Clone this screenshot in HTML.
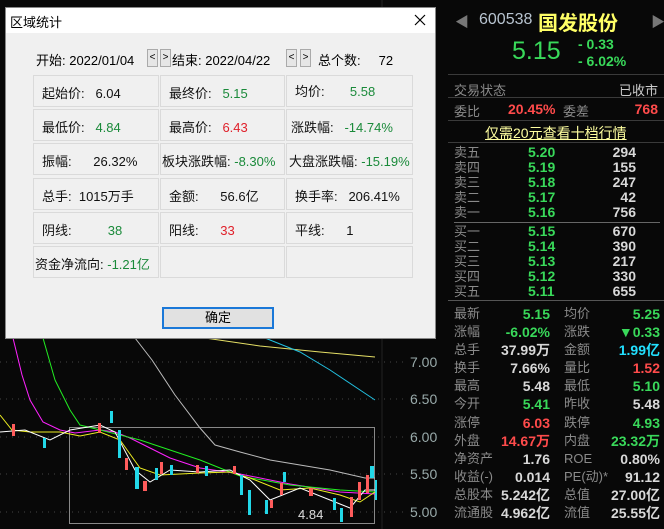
<!DOCTYPE html>
<html><head><meta charset="utf-8"><style>
*{margin:0;padding:0;box-sizing:border-box}
body{width:664px;height:529px;background:#080808;position:relative;overflow:hidden;font-family:"Liberation Sans","Noto Sans CJK SC",sans-serif}
.a{position:absolute;white-space:nowrap}
#dlg{position:absolute;left:5px;top:7px;width:431px;height:332px;background:#f0f0f0;border:1px solid #888}
#dlg .t{position:absolute;left:0;top:0;width:100%;height:25px;background:#fff;font-size:13px;color:#000;padding:4px 0 0 4px}
.c{position:absolute;border:1px solid #dadada;height:32px;font-size:13px;color:#111;padding:7px 0 0 8px;white-space:nowrap}
.g{color:#1a8a3a}.r{color:#e0202a}
.arr{position:absolute;width:11px;height:18px;border:1px solid #aaa;background:#e6e6e6;font-size:10px;text-align:center;line-height:15px;color:#000}
.rp{font-size:13px;color:#8a8a8a}
.gr{color:#39d95a}.rd{color:#ff4b4b}.wh{color:#d8d8d8}
.hl{position:absolute;left:448px;width:216px;height:1px;background:#3a3a3a}
</style></head><body>
<svg class="a" style="left:0;top:0" width="447" height="529">
<g stroke="#444" stroke-dasharray="1,5"><line x1="0" y1="362" x2="405" y2="362"/><line x1="0" y1="399" x2="405" y2="399"/><line x1="0" y1="437" x2="405" y2="437"/><line x1="0" y1="474" x2="405" y2="474"/><line x1="0" y1="512" x2="405" y2="512"/></g>
<line x1="382" y1="0" x2="382" y2="529" stroke="#222"/>
<rect x="69.5" y="427.5" width="305" height="96" fill="none" stroke="#888"/>
<polyline fill="none" stroke="#bbb" points="135,338 152,360 175,395 200,428 215,445 240,452 270,460 330,470 365,478 375,478"/>
<polyline fill="none" stroke="#e6e066" points="205,338 260,346 320,352 375,357"/>
<polyline fill="none" stroke="#22c0e0" points="265,338 300,352 330,370 360,390 375,400"/>
<polyline fill="none" stroke="#ff22ff" points="13,338 22,375 30,400 43,422 60,430 75,433 100,430 115,432 130,438 150,448 170,458 200,468 240,474 290,484 340,492 375,494"/>
<polyline fill="none" stroke="#22ee22" points="43,338 55,380 70,410 80,425 100,430 140,440 200,460 240,476 290,485 340,490 375,492"/>
<polyline fill="none" stroke="#eeee22" points="0,415 12,430 30,432 60,432 80,436 100,432 120,440 140,468 160,475 200,473 230,472 250,478 280,490 310,488 340,495 360,502 375,492"/>
<polyline fill="none" stroke="#fff" points="0,432 25,430 50,440 70,430 100,425 115,432 135,470 150,482 170,470 200,472 230,470 250,480 270,500 300,488 330,500 350,508 365,490 375,490"/>
<g fill="#22d8e8">
<rect x="43" y="438" width="3" height="10"/><rect x="118" y="430" width="3" height="28"/><rect x="135" y="467" width="4" height="22"/><rect x="110" y="411" width="3" height="12"/><rect x="155" y="468" width="3" height="12"/><rect x="170" y="465" width="3" height="10"/><rect x="205" y="466" width="3" height="10"/><rect x="240" y="475" width="3" height="20"/><rect x="248" y="490" width="3" height="25"/><rect x="265" y="500" width="3" height="14"/><rect x="283" y="472" width="3" height="10"/><rect x="333" y="498" width="3" height="12"/><rect x="340" y="508" width="3" height="14"/><rect x="370" y="466" width="4" height="12"/><rect x="375" y="480" width="2" height="20"/>
</g>
<g fill="#ff5c5c">
<rect x="12" y="424" width="3" height="12"/><rect x="98" y="423" width="3" height="10"/><rect x="125" y="458" width="3" height="12"/><rect x="143" y="481" width="4" height="10"/><rect x="160" y="462" width="3" height="12"/><rect x="196" y="465" width="3" height="8"/><rect x="233" y="466" width="3" height="8"/><rect x="270" y="500" width="3" height="8"/><rect x="280" y="483" width="3" height="12"/><rect x="309" y="488" width="4" height="8"/><rect x="350" y="497" width="3" height="20"/><rect x="358" y="482" width="3" height="18"/><rect x="366" y="475" width="3" height="18"/>
</g>
<text x="298" y="519" fill="#ddd" font-size="13" font-family="Liberation Sans">4.84</text>
<g fill="#9aa" font-size="14" font-family="Liberation Sans"><text x="410" y="367">7.00</text><text x="410" y="404">6.50</text><text x="410" y="442">6.00</text><text x="410" y="479">5.50</text><text x="410" y="517">5.00</text></g>
<line x1="447.5" y1="0" x2="447.5" y2="529" stroke="#555"/>
</svg>

<div id="dlg">
<div class="t">区域统计<svg class="a" style="right:9px;top:6px" width="12" height="12"><path d="M1 1L11 11M11 1L1 11" stroke="#000" stroke-width="1.2"/></svg></div>
<div class="a" style="left:30px;top:42px;font-size:13px">开始: 2022/01/04</div>
<div class="arr" style="left:141px;top:41px">&lt;</div><div class="arr" style="left:154px;top:41px">&gt;</div>
<div class="a" style="left:166px;top:42px;font-size:13px">结束: 2022/04/22</div>
<div class="arr" style="left:280px;top:41px">&lt;</div><div class="arr" style="left:294px;top:41px">&gt;</div>
<div class="a" style="left:312px;top:42px;font-size:13px">总个数:&nbsp;&nbsp;&nbsp;&nbsp;&nbsp;72</div>

<div class="c" style="left:27px;top:67px;width:126px">起始价:&nbsp;&nbsp; 6.04</div>
<div class="c" style="left:154px;top:67px;width:125px">最终价:&nbsp;&nbsp; <span class="g">5.15</span></div>
<div class="c" style="left:280px;top:67px;width:127px;padding-top:5px">均价:&nbsp;&nbsp;&nbsp;&nbsp;&nbsp;&nbsp; <span class="g">5.58</span></div>

<div class="c" style="left:27px;top:101px;width:126px">最低价:&nbsp;&nbsp; <span class="g">4.84</span></div>
<div class="c" style="left:154px;top:101px;width:125px">最高价:&nbsp;&nbsp; <span class="r">6.43</span></div>
<div class="c" style="left:280px;top:101px;width:127px;padding-left:4px">涨跌幅:&nbsp;&nbsp; <span class="g">-14.74%</span></div>

<div class="c" style="left:27px;top:135px;width:126px">振幅:&nbsp;&nbsp;&nbsp;&nbsp;&nbsp; 26.32%</div>
<div class="c" style="left:154px;top:135px;width:125px;padding-left:1px">板块涨跌幅: <span class="g">-8.30%</span></div>
<div class="c" style="left:280px;top:135px;width:127px;padding-left:2px">大盘涨跌幅: <span class="g">-15.19%</span></div>

<div class="c" style="left:27px;top:170px;width:126px">总手:&nbsp; 1015万手</div>
<div class="c" style="left:154px;top:170px;width:125px">金额:&nbsp;&nbsp;&nbsp;&nbsp;&nbsp; 56.6亿</div>
<div class="c" style="left:280px;top:170px;width:127px">换手率:&nbsp;&nbsp; 206.41%</div>

<div class="c" style="left:27px;top:204px;width:126px">阴线:&nbsp;&nbsp;&nbsp;&nbsp;&nbsp;&nbsp;&nbsp;&nbsp;&nbsp; <span class="g">38</span></div>
<div class="c" style="left:154px;top:204px;width:125px">阳线:&nbsp;&nbsp;&nbsp;&nbsp;&nbsp; <span class="r">33</span></div>
<div class="c" style="left:280px;top:204px;width:127px">平线:&nbsp;&nbsp;&nbsp;&nbsp;&nbsp; 1</div>

<div class="c" style="left:27px;top:238px;width:126px;padding-left:1px">资金净流向: <span class="g">-1.21亿</span></div>
<div class="c" style="left:154px;top:238px;width:125px"></div>
<div class="c" style="left:280px;top:238px;width:127px"></div>

<div class="a" style="left:156px;top:299px;width:112px;height:22px;border:2px solid #1a78d8;background:#e1e1e1;font-size:13px;text-align:center;line-height:18px">确定</div>
</div>

<div class="a" style="left:455px;top:12px;color:#777;font-size:14px">◀</div>
<div class="a" style="left:651px;top:12px;color:#777;font-size:14px">▶</div>
<div class="a" style="left:479px;top:11px;color:#b8c4d0;font-size:16px">600538</div>
<div class="a" style="left:538px;top:7px;color:#ffff66;font-size:20px;font-weight:bold">国发股份</div>
<div class="a gr" style="left:512px;top:37px;font-size:25px">5.15</div>
<div class="a gr" style="left:578px;top:36px;font-size:14px;font-weight:bold">- 0.33</div>
<div class="a gr" style="left:578px;top:53px;font-size:14px;font-weight:bold">- 6.02%</div>
<div class="hl" style="top:74px"></div>
<div class="a rp" style="left:454px;top:80px">交易状态</div>
<div class="a" style="right:6px;top:80px;font-size:13px;color:#ccc">已收市</div>
<div class="hl" style="top:97px"></div>
<div class="a rp" style="left:454px;top:101px">委比</div>
<div class="a rd" style="left:508px;top:101px;font-size:14px;font-weight:bold">20.45%</div>
<div class="a rp" style="left:563px;top:101px">委差</div>
<div class="a rd" style="right:6px;top:101px;font-size:14px;font-weight:bold">768</div>
<div class="hl" style="top:120px"></div>
<div class="a" style="left:485px;top:123px;font-size:14px;color:#ffffa0;text-decoration:underline">仅需20元查看十档行情</div>
<div class="hl" style="top:142px"></div>

<div style="position:absolute;left:454px;top:145px;width:206px;font-size:14px;line-height:15px">
<div style="position:relative;height:15px"><span class="rp" style="position:absolute;left:0">卖五</span><span class="gr" style="position:absolute;left:74px;font-weight:bold">5.20</span><span class="wh" style="position:absolute;right:24px;font-weight:bold">294</span></div>
<div style="position:relative;height:15px"><span class="rp" style="position:absolute;left:0">卖四</span><span class="gr" style="position:absolute;left:74px;font-weight:bold">5.19</span><span class="wh" style="position:absolute;right:24px;font-weight:bold">155</span></div>
<div style="position:relative;height:15px"><span class="rp" style="position:absolute;left:0">卖三</span><span class="gr" style="position:absolute;left:74px;font-weight:bold">5.18</span><span class="wh" style="position:absolute;right:24px;font-weight:bold">247</span></div>
<div style="position:relative;height:15px"><span class="rp" style="position:absolute;left:0">卖二</span><span class="gr" style="position:absolute;left:74px;font-weight:bold">5.17</span><span class="wh" style="position:absolute;right:24px;font-weight:bold">42</span></div>
<div style="position:relative;height:15px"><span class="rp" style="position:absolute;left:0">卖一</span><span class="gr" style="position:absolute;left:74px;font-weight:bold">5.16</span><span class="wh" style="position:absolute;right:24px;font-weight:bold">756</span></div>
<div style="height:1px;background:#666;margin:2px 0 1px"></div>
<div style="position:relative;height:15px"><span class="rp" style="position:absolute;left:0">买一</span><span class="gr" style="position:absolute;left:74px;font-weight:bold">5.15</span><span class="wh" style="position:absolute;right:24px;font-weight:bold">670</span></div>
<div style="position:relative;height:15px"><span class="rp" style="position:absolute;left:0">买二</span><span class="gr" style="position:absolute;left:74px;font-weight:bold">5.14</span><span class="wh" style="position:absolute;right:24px;font-weight:bold">390</span></div>
<div style="position:relative;height:15px"><span class="rp" style="position:absolute;left:0">买三</span><span class="gr" style="position:absolute;left:74px;font-weight:bold">5.13</span><span class="wh" style="position:absolute;right:24px;font-weight:bold">217</span></div>
<div style="position:relative;height:15px"><span class="rp" style="position:absolute;left:0">买四</span><span class="gr" style="position:absolute;left:74px;font-weight:bold">5.12</span><span class="wh" style="position:absolute;right:24px;font-weight:bold">330</span></div>
<div style="position:relative;height:15px"><span class="rp" style="position:absolute;left:0">买五</span><span class="gr" style="position:absolute;left:74px;font-weight:bold">5.11</span><span class="wh" style="position:absolute;right:24px;font-weight:bold">655</span></div>
</div>
<div class="hl" style="top:300px;background:#555"></div>

<div style="position:absolute;left:454px;top:305px;width:206px;font-size:14px;line-height:18px">
<div style="position:relative;height:18.1px"><span class="rp" style="position:absolute;left:0">最新</span><span class="gr" style="position:absolute;right:110px;font-weight:bold">5.15</span><span class="rp" style="position:absolute;left:110px">均价</span><span class="gr" style="position:absolute;right:0;font-weight:bold">5.25</span></div>
<div style="position:relative;height:18.1px"><span class="rp" style="position:absolute;left:0">涨幅</span><span class="gr" style="position:absolute;right:110px;font-weight:bold">-6.02%</span><span class="rp" style="position:absolute;left:110px">涨跌</span><span class="gr" style="position:absolute;right:0;font-weight:bold">▼0.33</span></div>
<div style="position:relative;height:18.1px"><span class="rp" style="position:absolute;left:0">总手</span><span class="wh" style="position:absolute;right:110px;font-weight:bold">37.99万</span><span class="rp" style="position:absolute;left:110px">金额</span><span style="position:absolute;right:0;font-weight:bold;color:#22e0ff">1.99亿</span></div>
<div style="position:relative;height:18.1px"><span class="rp" style="position:absolute;left:0">换手</span><span class="wh" style="position:absolute;right:110px;font-weight:bold">7.66%</span><span class="rp" style="position:absolute;left:110px">量比</span><span class="rd" style="position:absolute;right:0;font-weight:bold">1.52</span></div>
<div style="position:relative;height:18.1px"><span class="rp" style="position:absolute;left:0">最高</span><span class="wh" style="position:absolute;right:110px;font-weight:bold">5.48</span><span class="rp" style="position:absolute;left:110px">最低</span><span class="gr" style="position:absolute;right:0;font-weight:bold">5.10</span></div>
<div style="position:relative;height:18.1px"><span class="rp" style="position:absolute;left:0">今开</span><span class="gr" style="position:absolute;right:110px;font-weight:bold">5.41</span><span class="rp" style="position:absolute;left:110px">昨收</span><span class="wh" style="position:absolute;right:0;font-weight:bold">5.48</span></div>
<div style="position:relative;height:18.1px"><span class="rp" style="position:absolute;left:0">涨停</span><span class="rd" style="position:absolute;right:110px;font-weight:bold">6.03</span><span class="rp" style="position:absolute;left:110px">跌停</span><span class="gr" style="position:absolute;right:0;font-weight:bold">4.93</span></div>
<div style="position:relative;height:18.1px"><span class="rp" style="position:absolute;left:0">外盘</span><span class="rd" style="position:absolute;right:110px;font-weight:bold">14.67万</span><span class="rp" style="position:absolute;left:110px">内盘</span><span class="gr" style="position:absolute;right:0;font-weight:bold">23.32万</span></div>
<div style="position:relative;height:18.1px"><span class="rp" style="position:absolute;left:0">净资产</span><span class="wh" style="position:absolute;right:110px;font-weight:bold">1.76</span><span class="rp" style="position:absolute;left:110px">ROE</span><span class="wh" style="position:absolute;right:0;font-weight:bold">0.80%</span></div>
<div style="position:relative;height:18.1px"><span class="rp" style="position:absolute;left:0">收益(-)</span><span class="wh" style="position:absolute;right:110px;font-weight:bold">0.014</span><span class="rp" style="position:absolute;left:110px">PE(动)*</span><span class="wh" style="position:absolute;right:0;font-weight:bold">91.12</span></div>
<div style="position:relative;height:18.1px"><span class="rp" style="position:absolute;left:0">总股本</span><span class="wh" style="position:absolute;right:110px;font-weight:bold">5.242亿</span><span class="rp" style="position:absolute;left:110px">总值</span><span class="wh" style="position:absolute;right:0;font-weight:bold">27.00亿</span></div>
<div style="position:relative;height:18.1px"><span class="rp" style="position:absolute;left:0">流通股</span><span class="wh" style="position:absolute;right:110px;font-weight:bold">4.962亿</span><span class="rp" style="position:absolute;left:110px">流值</span><span class="wh" style="position:absolute;right:0;font-weight:bold">25.55亿</span></div>
</div>
</body></html>
